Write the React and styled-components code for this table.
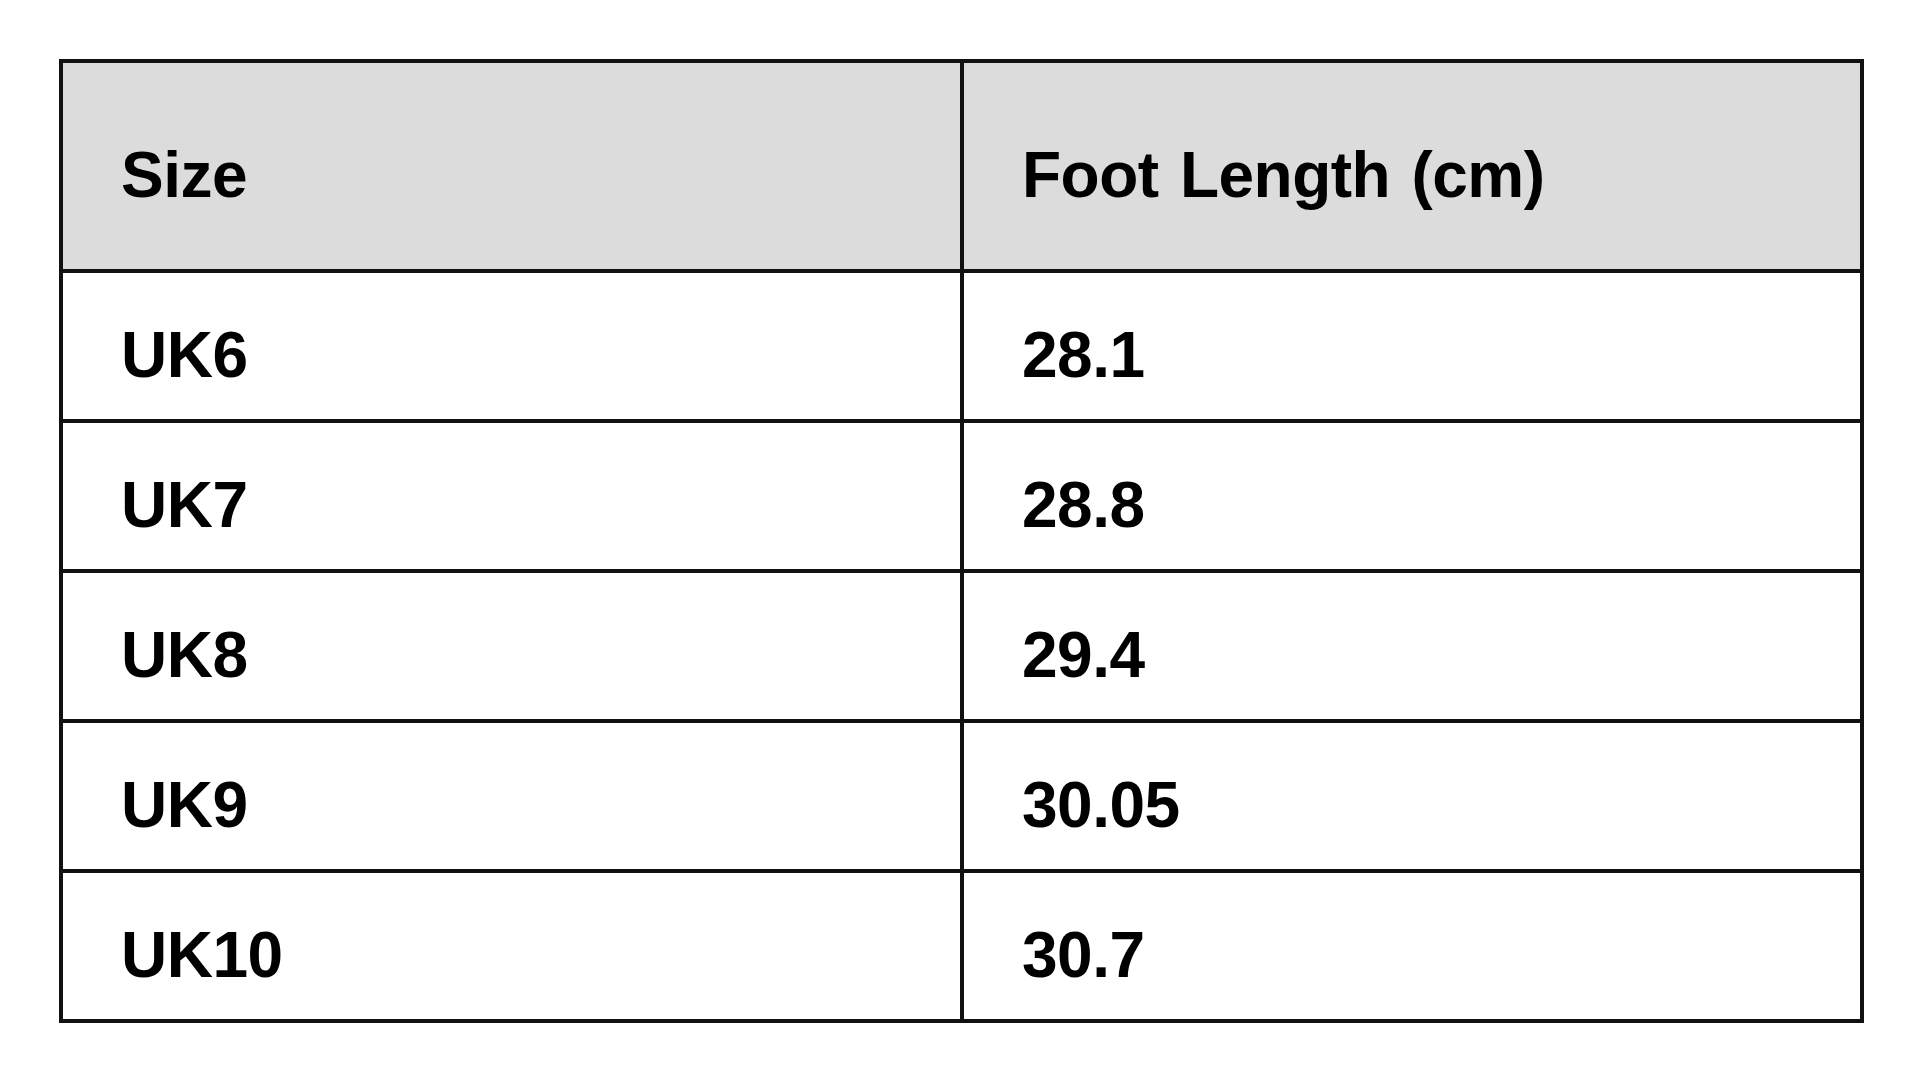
import React from 'react';
import styled, { createGlobalStyle } from 'styled-components';

const rows = [
  ['UK6', '28.1'],
  ['UK7', '28.8'],
  ['UK8', '29.4'],
  ['UK9', '30.05'],
  ['UK10', '30.7'],
];

const GlobalStyle = createGlobalStyle`
  html, body {
    margin: 0;
    padding: 0;
    background: #ffffff;
  }
  body {
    font-family: "Liberation Sans", Arial, sans-serif;
  }
`;

const Page = styled.div`
  width: 1920px;
  height: 1080px;
  padding: 59px 0 0 59px;
  box-sizing: border-box;
`;

const Grid = styled.div`
  display: grid;
  grid-template-columns: 901px 896px;
  width: 1805px;
  border: 4px solid #111;
  box-sizing: border-box;
`;

const Cell = styled.div`
  display: flex;
  align-items: center;
  box-sizing: border-box;
  height: ${p => (p.$head ? '210px' : p.$last ? '146px' : '150px')};
  padding: 18px 0 0 ${p => (p.$right ? '58px' : '58px')};
  background: ${p => (p.$head ? '#dcdcdc' : '#ffffff')};
  border-bottom: ${p => (p.$last ? 'none' : '4px solid #111')};
  border-right: ${p => (p.$right ? 'none' : '4px solid #111')};
  font-size: 64px;
  font-weight: bold;
  letter-spacing: -0.5px;
  word-spacing: 4px;
  color: #000;
`;

export default function App() {
  return (
    <>
      <GlobalStyle />
      <Page>
        <Grid>
          <Cell $head>Size</Cell>
          <Cell $head $right>Foot Length (cm)</Cell>
          {rows.map(([size, len], i) => {
            const last = i === rows.length - 1;
            return (
              <React.Fragment key={size}>
                <Cell $last={last}>{size}</Cell>
                <Cell $last={last} $right>{len}</Cell>
              </React.Fragment>
            );
          })}
        </Grid>
      </Page>
    </>
  );
}
